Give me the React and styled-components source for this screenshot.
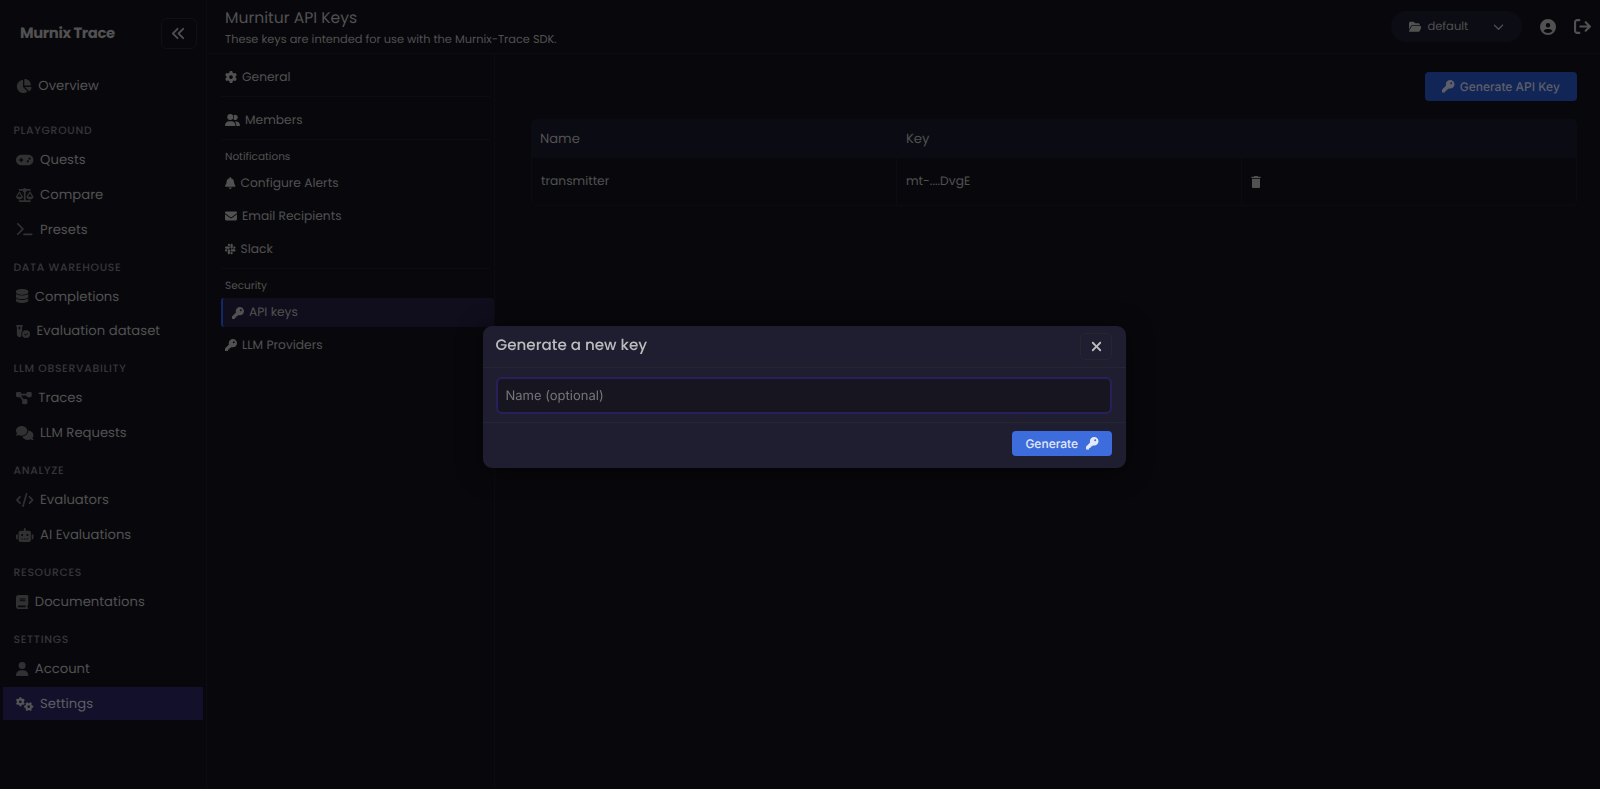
import styled, { createGlobalStyle } from 'styled-components';
import {
	FaAnglesLeft,
	FaArrowRightFromBracket,
	FaBell,
	FaBook,
	FaChartPie,
	FaChevronDown,
	FaCircleUser,
	FaCode,
	FaComments,
	FaDatabase,
	FaDiagramProject,
	FaEnvelope,
	FaFolderOpen,
	FaGamepad,
	FaGear,
	FaGears,
	FaKey,
	FaRobot,
	FaScaleBalanced,
	FaSlack,
	FaTerminal,
	FaUser,
	FaUserGroup,
	FaVialCircleCheck,
	FaXmark,
} from 'react-icons/fa6';
import { MdDelete } from 'react-icons/md';

const GlobalStyle = createGlobalStyle`
	* {
		box-sizing: border-box;
	}

	body {
		margin: 0;
		background: #08080c;
		color: #515151;
		font-family: Poppins, Inter, sans-serif;
		text-rendering: geometricPrecision;
		overflow: hidden;
	}

	svg {
		display: block;
		flex: none;
	}
`;

const Page = styled.div`
	display: flex;
	width: 100%;
	height: 100vh;
`;

const Sidebar = styled.aside`
	flex: none;
	width: 207px;
	padding: 18px 3px 0;
	border-right: 1px solid #0d0d10;
`;

const Brand = styled.div`
	display: flex;
	align-items: center;
	justify-content: space-between;
	height: 31px;
	margin-bottom: 20px;
	padding: 0 6px 0 17px;
`;

const BrandName = styled.span`
	padding-top: 1px;
	font-size: 14.8px;
	font-weight: 700;
	letter-spacing: -0.025em;
`;

const CollapseButton = styled.button`
	display: flex;
	align-items: center;
	justify-content: center;
	width: 36px;
	height: 31px;
	padding: 0 1px 0 0;
	border: 1px solid #111113;
	border-radius: 6px;
	background: none;
	color: #4e4e4e;
`;

const Overview = styled.div`
	margin-bottom: 9px;
`;

const SectionTitle = styled.div`
	height: 32.5px;
	padding: 13.2px 0 0 10.5px;
	color: #363639;
	font-size: 10.8px;
	font-weight: 500;
	line-height: 13px;
	letter-spacing: 0.7px;
	text-transform: uppercase;
`;

const NavItem = styled.a`
	display: flex;
	align-items: center;
	gap: 6.3px;
	width: 200px;
	height: 33px;
	margin-bottom: 1.65px;
	padding-left: 13.3px;
	background: ${({ $active }) => ($active ? '#13102c' : 'transparent')};
	color: ${({ $active }) => ($active ? '#5e5e60' : '#515151')};
	font-size: 13.2px;
	white-space: nowrap;

	svg {
		color: ${({ $active }) => ($active ? '#545456' : '#313133')};
	}
`;

const Label = styled.span`
	padding-top: ${({ $drop = 0.5 }) => $drop}px;
`;

const GlyphBox = styled.span`
	flex: none;

	svg {
		width: ${({ $width }) => $width}px;
		height: ${({ $height }) => $height}px;
	}
`;

const Main = styled.div`
	display: flex;
	flex: 1;
	flex-direction: column;
	min-width: 0;
`;

const Header = styled.header`
	display: flex;
	justify-content: space-between;
	flex: none;
	height: 54px;
	padding: 8px 9.5px 0 18px;
	border-bottom: 1px solid #0d0d10;
`;

const Title = styled.h1`
	margin: 0;
	font-size: 15.6px;
	font-weight: 400;
	line-height: 21px;
`;

const Subtitle = styled.p`
	margin: 0;
	font-size: 11.35px;
	line-height: 21px;
`;

const HeaderActions = styled.div`
	display: flex;
	align-items: center;
	height: 37px;
`;

const ProjectSelect = styled.div`
	display: flex;
	align-items: center;
	width: 131px;
	height: 31px;
	margin-right: 18px;
	padding: 0 18px;
	border-radius: 16px;
	background: #0c0c14;
	font-size: 11.5px;

	> :last-child {
		margin-left: auto;
	}
`;

const ProjectName = styled.span`
	margin-left: 6px;
	padding-top: 1px;
`;

const HeaderIcon = styled.span`
	margin-left: ${({ $gap = 0 }) => $gap}px;
`;

const Body = styled.div`
	display: flex;
	flex: 1;
`;

const SettingsNav = styled.nav`
	flex: none;
	width: 288px;
	padding-left: 14px;
	border-right: 1px solid #0c0c0f;
`;

const SettingsLink = styled.a`
	display: flex;
	align-items: center;
	gap: 5px;
	height: ${({ $height = 33 }) => $height}px;
	padding-top: ${({ $drop = 0 }) => $drop}px;
	padding-left: ${({ $active }) => ($active ? 9 : 4)}px;
	border-left: ${({ $active }) => ($active ? '2px solid #122a63' : 'none')};
	border-radius: ${({ $active }) => ($active ? '3px' : 0)};
	background: ${({ $active }) => ($active ? '#100d1c' : 'transparent')};
	font-size: 12.25px;
`;

const Divider = styled.div`
	height: 1px;
	margin: ${({ $top = 0 }) => $top}px 4px 0 0;
	background: #0d0d10;
`;

const GroupLabel = styled.div`
	height: ${({ $height }) => $height}px;
	padding: 9px 0 0 4px;
	font-size: 10.5px;
	line-height: 16px;
`;

const Content = styled.section`
	display: flex;
	flex: 1;
	flex-direction: column;
	padding: 18px 23px 0 35.5px;
`;

const PrimaryButton = styled.button`
	display: flex;
	align-items: center;
	justify-content: center;
	gap: ${({ $gap = 5 }) => $gap}px;
	width: ${({ $width }) => $width}px;
	height: ${({ $height }) => $height}px;
	padding: 0;
	border: none;
	border-radius: 4px;
	background: ${({ $dimmed }) => ($dimmed ? '#122557' : '#3d6cdd')};
	color: ${({ $dimmed }) => ($dimmed ? '#5e6069' : '#e4e9f7')};
	font-family: Inter, sans-serif;
	font-size: 12px;
	font-weight: 500;
	text-rendering: geometricPrecision;
`;

const Toolbar = styled.div`
	display: flex;
	justify-content: flex-end;
	margin-bottom: 18px;
`;

const Table = styled.div`
	border-radius: 5px;
	overflow: hidden;
`;

const TableHead = styled.div`
	display: grid;
	grid-template-columns: 366px 345px 1fr;
	align-items: center;
	height: 39px;
	background: #0b0b14;
	font-size: 13.15px;
`;

const TableRow = styled.div`
	display: grid;
	grid-template-columns: 365px 345px 1fr;
	height: 48px;
	border: 1px solid #0c0c10;
	border-top: none;
	border-radius: 0 0 5px 5px;
	font-size: 12.25px;
`;

const HeadCell = styled.div`
	padding-left: 9.5px;
`;

const Cell = styled.div`
	display: flex;
	align-items: center;
	padding-left: 9.5px;
	border-right: 1px solid #0c0c10;

	&:last-child {
		padding-left: 6px;
		border-right: none;
	}
`;

const ModalLayer = styled.div`
	position: fixed;
	inset: 0;
	display: flex;
	align-items: flex-start;
	justify-content: center;
	padding: 326px 0 0 8px;
`;

const Modal = styled.div`
	width: 643px;
	height: 142px;
	border-radius: 9px;
	background: #1f1d30;
	box-shadow: 0 4px 24px rgba(0, 0, 0, 0.5);
	color: #bcbbbd;
`;

const ModalHeader = styled.div`
	display: flex;
	justify-content: space-between;
	height: 42px;
	padding: 7px 13.5px 0 13px;
	border-bottom: 1px solid #27262e;
`;

const ModalTitle = styled.h2`
	margin: 0;
	font-size: 15.15px;
	font-weight: 500;
	line-height: 25px;
`;

const CloseButton = styled.button`
	display: flex;
	align-items: center;
	justify-content: center;
	width: 32px;
	height: 27px;
	padding: 0;
	border: 1px solid #27262e;
	border-radius: 6px;
	background: none;
	color: #bcbbbd;
`;

const ModalBody = styled.div`
	height: 55px;
	padding: 9px 13.5px 0 13px;
	border-bottom: 1px solid #27262e;
`;

const NameInput = styled.input`
	display: block;
	width: 100%;
	height: 37px;
	padding: 0 8px;
	border: 2px solid #27205a;
	border-radius: 6px;
	background: #17151f;
	color: #bcbbbd;
	font-family: Inter, sans-serif;
	font-size: 13px;
	text-rendering: geometricPrecision;
	outline: none;

	&::placeholder {
		color: #76757b;
		opacity: 1;
	}
`;

const ModalFooter = styled.div`
	display: flex;
	justify-content: flex-end;
	padding: 8px 13.5px 0;
`;

// ratio is the width of the glyph's viewBox relative to its height
const navSections = [
	{
		title: 'Playground',
		items: [
			{ label: 'Quests', icon: FaGamepad, ratio: 1.25 },
			{ label: 'Compare', icon: FaScaleBalanced, ratio: 1.25 },
			{ label: 'Presets', icon: FaTerminal, ratio: 1.25 },
		],
	},
	{
		title: 'Data warehouse',
		items: [
			{ label: 'Completions', icon: FaDatabase, ratio: 0.875 },
			{ label: 'Evaluation dataset', icon: FaVialCircleCheck, ratio: 1 },
		],
	},
	{
		title: 'LLM observability',
		items: [
			{ label: 'Traces', icon: FaDiagramProject, ratio: 1.125 },
			{ label: 'LLM Requests', icon: FaComments, ratio: 1.25 },
		],
	},
	{
		title: 'Analyze',
		items: [
			{ label: 'Evaluators', icon: FaCode, ratio: 1.25 },
			{ label: 'AI Evaluations', icon: FaRobot, ratio: 1.25 },
		],
	},
	{ title: 'Resources', items: [{ label: 'Documentations', icon: FaBook, ratio: 0.875 }] },
	{
		title: 'Settings',
		items: [
			{ label: 'Account', icon: FaUser, ratio: 0.875 },
			{ label: 'Settings', icon: FaGears, ratio: 1.25, active: true },
		],
	},
];

const Glyph = ({ icon: Icon, size = 12, ratio = 1 }) => (
	<GlyphBox $width={size * ratio} $height={size}>
		<Icon />
	</GlyphBox>
);

const SideLink = ({ label, icon, ratio, active }) => (
	<NavItem $active={active}>
		<Glyph icon={icon} size={14} ratio={ratio} />
		<Label>{label}</Label>
	</NavItem>
);

const SideNav = () => (
	<Sidebar>
		<Brand>
			<BrandName>Murnix Trace</BrandName>
			<CollapseButton>
				<FaAnglesLeft size={15} />
			</CollapseButton>
		</Brand>
		<Overview>
			<SideLink label="Overview" icon={FaChartPie} ratio={1.125} />
		</Overview>
		{navSections.map(({ title, items }) => (
			<div key={title}>
				<SectionTitle>{title}</SectionTitle>
				{items.map((item) => (
					<SideLink key={item.label} {...item} />
				))}
			</div>
		))}
	</Sidebar>
);

const MenuLink = ({ label, icon, ratio, ...rest }) => (
	<SettingsLink {...rest}>
		<Glyph icon={icon} ratio={ratio} />
		<Label $drop={1.6}>{label}</Label>
	</SettingsLink>
);

const SettingsMenu = () => (
	<SettingsNav>
		<MenuLink label="General" icon={FaGear} $height={42} $drop={4} />
		<Divider />
		<MenuLink label="Members" icon={FaUserGroup} ratio={1.25} $height={42} $drop={4} />
		<Divider />
		<GroupLabel $height={26.5}>Notifications</GroupLabel>
		<MenuLink label="Configure Alerts" icon={FaBell} ratio={0.875} />
		<MenuLink label="Email Recipients" icon={FaEnvelope} />
		<MenuLink label="Slack" icon={FaSlack} ratio={0.875} />
		<Divider $top={2.5} />
		<GroupLabel $height={29}>Security</GroupLabel>
		<MenuLink label="API keys" icon={FaKey} $active $height={29} />
		<MenuLink label="LLM Providers" icon={FaKey} $height={36} />
	</SettingsNav>
);

const KeysTable = () => (
	<Table>
		<TableHead>
			<HeadCell>Name</HeadCell>
			<HeadCell>Key</HeadCell>
		</TableHead>
		<TableRow>
			<Cell>
				<Label $drop={1.6}>transmitter</Label>
			</Cell>
			<Cell>
				<Label $drop={1.6}>mt-....DvgE</Label>
			</Cell>
			<Cell>
				<MdDelete size={16} />
			</Cell>
		</TableRow>
	</Table>
);

const GenerateKeyModal = () => (
	<ModalLayer>
		<Modal>
			<ModalHeader>
				<ModalTitle>Generate a new key</ModalTitle>
				<CloseButton>
					<FaXmark size={15} />
				</CloseButton>
			</ModalHeader>
			<ModalBody>
				<NameInput placeholder="Name (optional)" />
			</ModalBody>
			<ModalFooter>
				<PrimaryButton $width={100} $height={25} $gap={8}>
					Generate
					<FaKey size={12.5} />
				</PrimaryButton>
			</ModalFooter>
		</Modal>
	</ModalLayer>
);

const App = () => (
	<>
		<GlobalStyle />
		<Page>
			<SideNav />
			<Main>
				<Header>
					<div>
						<Title>Murnitur API Keys</Title>
						<Subtitle>These keys are intended for use with the Murnix-Trace SDK.</Subtitle>
					</div>
					<HeaderActions>
						<ProjectSelect>
							<Glyph icon={FaFolderOpen} size={11.5} ratio={1.125} />
							<ProjectName>default</ProjectName>
							<FaChevronDown size={11} />
						</ProjectSelect>
						<HeaderIcon>
							<FaCircleUser size={16} />
						</HeaderIcon>
						<HeaderIcon $gap={18}>
							<FaArrowRightFromBracket size={17} />
						</HeaderIcon>
					</HeaderActions>
				</Header>
				<Body>
					<SettingsMenu />
					<Content>
						<Toolbar>
							<PrimaryButton $dimmed $width={152} $height={29}>
								<FaKey size={12.5} />
								Generate API Key
							</PrimaryButton>
						</Toolbar>
						<KeysTable />
					</Content>
				</Body>
			</Main>
		</Page>
		<GenerateKeyModal />
	</>
);

export default App;
